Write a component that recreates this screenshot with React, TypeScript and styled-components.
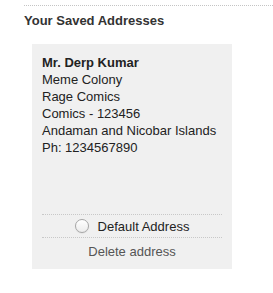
import React from "react";
import styled, { createGlobalStyle } from "styled-components";

const Global = createGlobalStyle`
  html, body { margin: 0; padding: 0; background: #fff; }
  body { font-family: "Liberation Sans", Arial, Helvetica, sans-serif; }
`;

const Page = styled.div`
  padding: 5px 0 0 24px;
`;

const Section = styled.section`
  border-top: 1px dotted #c4c4c4;
`;

const Heading = styled.h3`
  margin: 7px 0 0;
  font-size: 13px;
  line-height: 16px;
  font-weight: bold;
  color: #333;
`;

const Card = styled.div`
  margin: 15px 0 0 8px;
  width: 200px;
  height: 225px;
  box-sizing: border-box;
  padding: 10px 10px 9px;
  background: #f0f0f0;
  display: flex;
  flex-direction: column;
  font-size: 13px;
  line-height: 17px;
  color: #222;
`;

const Address = styled.div`
  flex: 1;
`;

const Name = styled.div`
  font-weight: bold;
`;

const DefaultRow = styled.label`
  border-top: 1px dotted #c8c8c8;
  border-bottom: 1px dotted #c8c8c8;
  height: 22px;
  display: flex;
  align-items: center;
  justify-content: center;
  gap: 9px;
  color: #222;
`;

const Radio = styled.span`
  width: 14px;
  height: 14px;
  box-sizing: border-box;
  border-radius: 50%;
  border: 1px solid #a6a6a6;
  background: linear-gradient(#ffffff, #ececec);
  box-shadow: inset 0 1px 1px rgba(255, 255, 255, 0.9), 0 0.5px 1px rgba(0, 0, 0, 0.1);
`;

const Delete = styled.div`
  padding-top: 5px;
  text-align: center;
  color: #555;
`;

export default function App() {
  const lines = [
    "Meme Colony",
    "Rage Comics",
    "Comics - 123456",
    "Andaman and Nicobar Islands",
    "Ph: 1234567890",
  ];
  return (
    <>
      <Global />
      <Page>
        <Section>
          <Heading>Your Saved Addresses</Heading>
          <Card>
            <Address>
              <Name>Mr. Derp Kumar</Name>
              {lines.map((l) => (
                <div key={l}>{l}</div>
              ))}
            </Address>
            <DefaultRow>
              <Radio />
              Default Address
            </DefaultRow>
            <Delete>Delete address</Delete>
          </Card>
        </Section>
      </Page>
    </>
  );
}
